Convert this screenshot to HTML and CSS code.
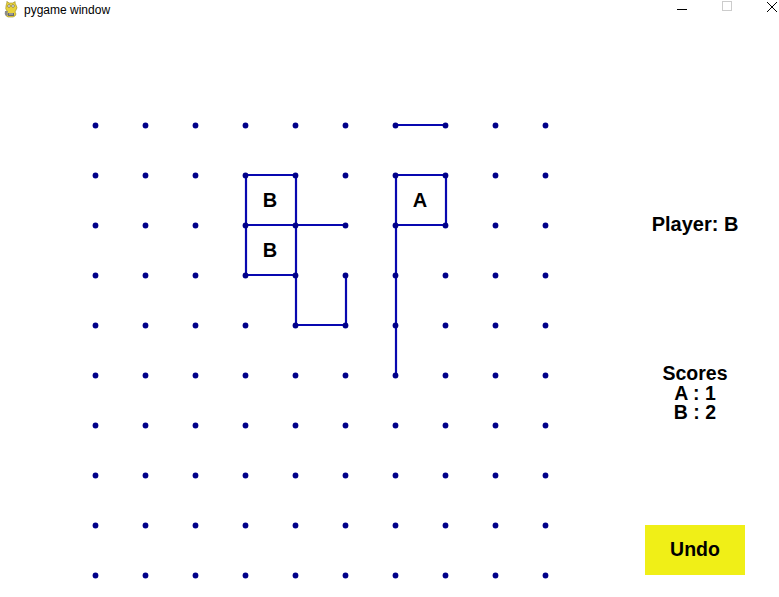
FILE: index.html
```html
<!DOCTYPE html>
<html>
<head>
<meta charset="utf-8">
<title>pygame window</title>
<link rel="stylesheet" href="styles.css">
</head>
<body>
<div class="titlebar">
  <svg class="appicon" width="16" height="18" viewBox="0 0 16 18">
    <path d="M4 1 Q3 0 5 1 L6 2 L10 2 L11 1 Q13 0 12 2 L13 4 Q15 7 13 9 L12 11 Q14 13 12 15 L10 16 L5 16 Q2 15 3 12 L4 10 Q2 8 3 5 Z" fill="#e8d23a" stroke="#9a8a20" stroke-width="0.6"/>
    <circle cx="6" cy="5" r="1.3" fill="#fff" stroke="#333" stroke-width="0.5"/>
    <circle cx="10" cy="5" r="1.3" fill="#fff" stroke="#333" stroke-width="0.5"/>
    <path d="M2 10 Q1 13 3 15 L5 14 Q4 12 5 10 Z" fill="#8a8a8a"/>
    <path d="M5 12 L11 12 L11 15 L5 15 Z" fill="#6b6b6b"/>
    <path d="M6 13 L10 13" stroke="#ddd" stroke-width="0.8"/>
  </svg>
  <span class="title">pygame window</span>
  <div class="controls">
    <svg width="10" height="14" viewBox="0 0 10 14"><path d="M0 9.5 H10" stroke="#000" stroke-width="1"/></svg>
    <svg width="10" height="14" viewBox="0 0 10 14"><rect x="0.5" y="1.5" width="9" height="9" fill="none" stroke="#ccc" stroke-width="1"/></svg>
    <svg width="10" height="14" viewBox="0 0 10 14"><path d="M0 2 L10 12 M10 2 L0 12" stroke="#000" stroke-width="1"/></svg>
  </div>
</div>
<div class="game">
  <svg class="board" width="620" height="575" viewBox="0 22 620 575">
    <g class="lines" stroke="#0808b0" stroke-width="2.2" fill="none">
      <line x1="395" y1="125" x2="445" y2="125"/>
      <line x1="245" y1="175" x2="296" y2="175"/>
      <line x1="246" y1="175" x2="246" y2="275"/>
      <line x1="296" y1="175" x2="296" y2="325"/>
      <line x1="245" y1="225" x2="345" y2="225"/>
      <line x1="245" y1="275" x2="296" y2="275"/>
      <line x1="295" y1="325" x2="346" y2="325"/>
      <line x1="346" y1="275" x2="346" y2="325"/>
      <line x1="395" y1="175" x2="446" y2="175"/>
      <line x1="395" y1="225" x2="446" y2="225"/>
      <line x1="446" y1="175" x2="446" y2="225"/>
      <line x1="396" y1="175" x2="396" y2="375"/>
    </g>
    <g class="labels">
      <text x="270" y="207">B</text>
      <text x="270" y="257">B</text>
      <text x="420" y="207">A</text>
    </g>
    <g id="dots" fill="#00008a"></g>
  </svg>
  <div class="side">
    <div class="player">Player: B</div>
    <div class="scores">
      <div class="row">Scores</div>
      <div class="row">A : 1</div>
      <div class="row">B : 2</div>
    </div>
    <div class="undo">Undo</div>
  </div>
</div>
<script>
  var g = document.getElementById('dots');
  var ns = 'http://www.w3.org/2000/svg';
  for (var r = 0; r < 10; r++) {
    for (var c = 0; c < 10; c++) {
      var d = document.createElementNS(ns, 'circle');
      d.setAttribute('cx', 95.5 + 50 * c);
      d.setAttribute('cy', 125.5 + 50 * r);
      d.setAttribute('r', 2.9);
      g.appendChild(d);
    }
  }
</script>
</body>
</html>
```

FILE: styles.css
```css
html, body {
  margin: 0;
  padding: 0;
  background: #ffffff;
}
body {
  width: 779px;
  height: 597px;
  overflow: hidden;
  font-family: "Liberation Sans", Arial, sans-serif;
}
.titlebar {
  height: 22px;
  display: flex;
  align-items: flex-start;
  background: #ffffff;
}
.appicon {
  margin-left: 3px;
  margin-top: 1px;
}
.title {
  margin-left: 5px;
  font-size: 12px;
  line-height: 14px;
  color: #000;
  margin-top: 3px;
}
.controls {
  margin-left: auto;
  margin-right: 2px;
  display: flex;
  gap: 35px;
  align-items: flex-start;
  margin-top: 0;
}
.controls svg {
  display: block;
}
.game {
  display: flex;
  height: 575px;
}
.board {
  display: block;
  flex: none;
}
.labels text {
  font-family: "Liberation Sans", Arial, sans-serif;
  font-weight: bold;
  font-size: 20px;
  text-anchor: middle;
  fill: #000;
}
.side {
  width: 150px;
  display: flex;
  flex-direction: column;
  align-items: center;
  font-weight: bold;
  font-size: 20px;
  color: #000;
}
.player {
  margin-top: 192px;
  line-height: 20px;
}
.scores {
  margin-top: 130px;
  text-align: center;
  display: flex;
  flex-direction: column;
  align-items: center;
}
.row {
  height: 19.5px;
  line-height: 19.5px;
  font-size: 19.5px;
}
.undo {
  margin-top: 102px;
  width: 100px;
  height: 50px;
  background: #f0ef17;
  display: flex;
  align-items: center;
  justify-content: center;
  font-size: 19.5px;
}
```
